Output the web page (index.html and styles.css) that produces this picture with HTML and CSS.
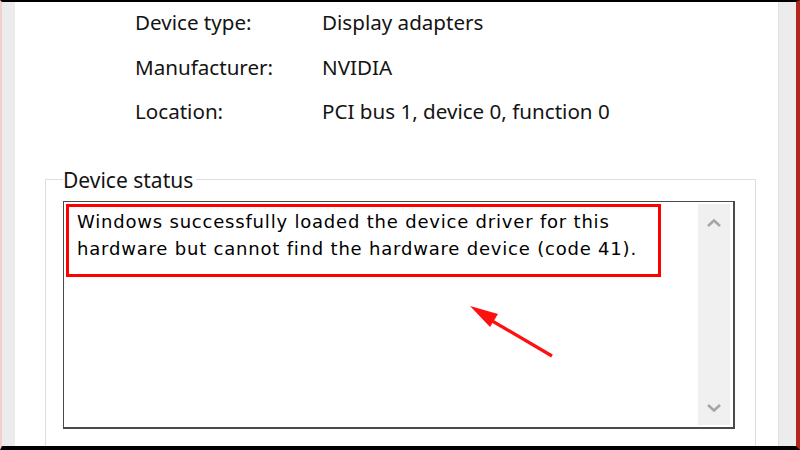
FILE: index.html
```html
<!DOCTYPE html>
<html lang="en">
<head>
<meta charset="UTF-8">
<title>Device Properties</title>
<link rel="stylesheet" href="styles.css">
</head>
<body>
<div class="frame">
    <div class="strip"></div>

    <div class="main">
        <div class="info">
            <div class="row"><span class="label">Device type:</span><span class="value">Display adapters</span></div>
            <div class="row"><span class="label">Manufacturer:</span><span class="value">NVIDIA</span></div>
            <div class="row"><span class="label">Location:</span><span class="value">PCI bus 1, device 0, function 0</span></div>
        </div>

        <fieldset class="group">
            <legend>Device status</legend>
            <div class="textbox">
                <div class="content">
                    <div class="highlight">Windows successfully loaded the device driver for this<br>hardware but cannot find the hardware device (code 41).</div>
                </div>
                <div class="scrollbar">
                    <svg width="16" height="10" viewBox="0 0 16 10"><path d="M2 8 L8 2.5 L14 8" fill="none" stroke="#a6a6a6" stroke-width="2.6"/></svg>
                    <svg width="16" height="10" viewBox="0 0 16 10"><path d="M2 2 L8 7.5 L14 2" fill="none" stroke="#a6a6a6" stroke-width="2.6"/></svg>
                </div>
            </div>
        </fieldset>

        <!-- annotation arrow -->
        <svg class="arrow" width="100" height="70" viewBox="0 0 100 70">
            <line x1="92" y1="56" x2="22" y2="15" stroke="#ff1010" stroke-width="3.2"/>
            <polygon points="10,6 30,27 38,14" fill="#ff1010"/>
        </svg>
    </div>

    <div class="strip strip-right"></div>
</div>
</body>
</html>
```

FILE: styles.css
```css
body {
margin: 0;
background: #000;
}
.frame {
display: flex;
width: 794px;
height: 444px;
background: #fff;
border-top: 2px solid #000;
border-bottom: 4px solid #000;
border-left: 2px solid #f2cfcf;
border-right: 4px solid #b3261e;
overflow: hidden;
}
.strip {
width: 13px;
background: #ececec;
flex-shrink: 0;
}
.strip-right {
width: 17px;
border-left: 1px solid #e0e0e0;
}
.main {
position: relative;
flex: 1;
}
.info {
padding-left: 120px;
font-family: "Noto Sans", sans-serif;
font-size: 20.6px;
color: #141414;
}
.row {
display: flex;
height: 44.5px;
line-height: 40px;
}
.label {
width: 187px;
}
.group {
margin: 32px 22px 0 30px;
padding: 0 0 0 17px;
height: 300px;
border: 1px solid #dedede;
border-bottom: none;
}
.group legend {
padding: 0 3px 0 0;
margin-left: 0;
font-family: "Noto Sans", sans-serif;
font-size: 21px;
color: #141414;
line-height: 24px;
}
.textbox {
display: flex;
width: 665px;
height: 221px;
margin-top: 9px;
padding: 2px;
border: 1px solid #4a4a4a;
border-bottom-width: 2px;
border-right-width: 2px;
}
.content {
flex: 1;
}
.highlight {
width: 581px;
height: 66px;
padding: 1px 0 0 8px;
border: 3px solid #ff0000;
font-family: "DejaVu Sans", sans-serif;
font-size: 18px;
line-height: 27px;
letter-spacing: 0.8px;
white-space: nowrap;
color: #000;
}
.scrollbar {
width: 32px;
background: #f0f0f0;
display: flex;
flex-direction: column;
justify-content: space-between;
align-items: center;
padding: 14px 0 12px;
box-sizing: border-box;
margin-right: 1px;
}
.arrow {
position: absolute;
left: 445px;
top: 298px;
}
```
